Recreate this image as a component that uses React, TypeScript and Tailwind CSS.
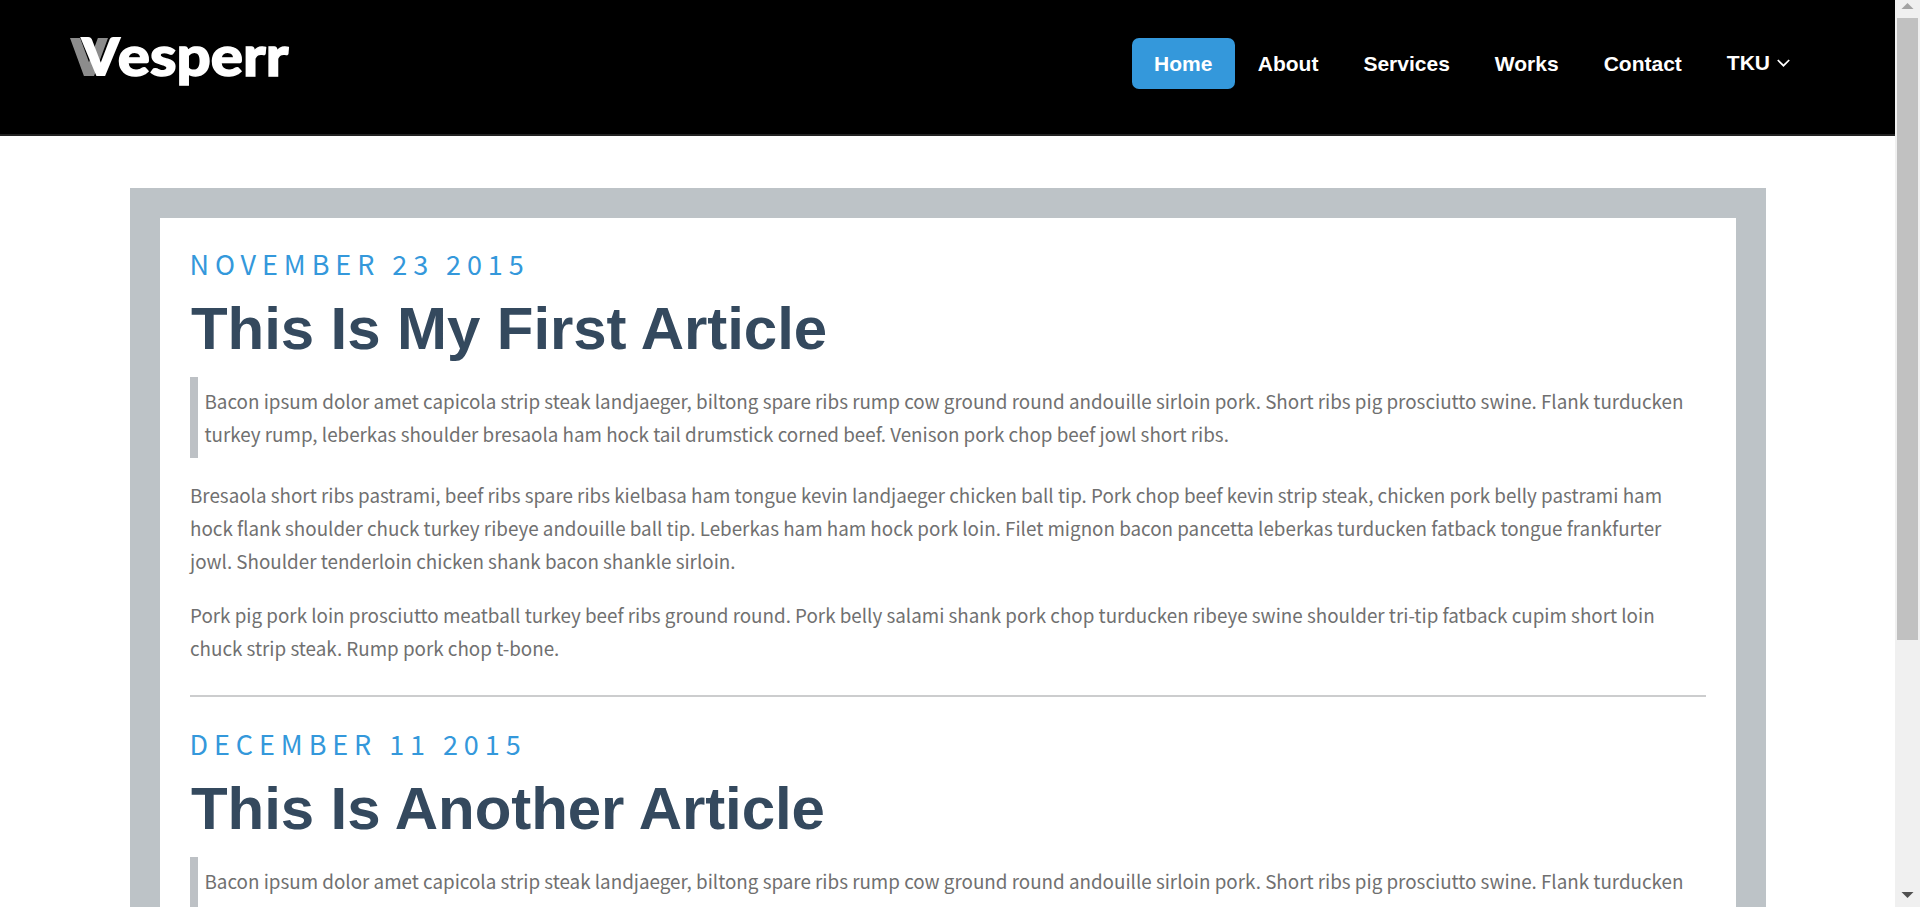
import React from "react";

const navItems = ["About", "Services", "Works", "Contact"];

const quote = [
  "Bacon ipsum dolor amet capicola strip steak landjaeger, biltong spare ribs rump cow ground round andouille sirloin pork. Short ribs pig prosciutto swine. Flank turducken",
  "turkey rump, leberkas shoulder bresaola ham hock tail drumstick corned beef. Venison pork chop beef jowl short ribs.",
];

const paragraphs = [
  [
    "Bresaola short ribs pastrami, beef ribs spare ribs kielbasa ham tongue kevin landjaeger chicken ball tip. Pork chop beef kevin strip steak, chicken pork belly pastrami ham",
    "hock flank shoulder chuck turkey ribeye andouille ball tip. Leberkas ham ham hock pork loin. Filet mignon bacon pancetta leberkas turducken fatback tongue frankfurter",
    "jowl. Shoulder tenderloin chicken shank bacon shankle sirloin.",
  ],
  [
    "Pork pig pork loin prosciutto meatball turkey beef ribs ground round. Pork belly salami shank pork chop turducken ribeye swine shoulder tri-tip fatback cupim short loin",
    "chuck strip steak. Rump pork chop t-bone.",
  ],
];

const articles = [
  { date: "NOVEMBER 23 2015", title: "This Is My First Article", quote, paragraphs },
  { date: "DECEMBER 11 2015", title: "This Is Another Article", quote: quote.slice(0, 1), paragraphs: [] },
];

function Lines({ lines }: { lines: string[] }) {
  return (
    <>
      {lines.map((line) => (
        <span key={line} className="block whitespace-nowrap">
          {line}
        </span>
      ))}
    </>
  );
}

function Logo() {
  return (
    <svg width="226" height="72" viewBox="66 24 226 72" aria-label="Vesperr" className="-mt-[10px] overflow-visible font-['Lato'] font-black">
      <clipPath id="mark">
        <rect x="66" y="38" width="60" height="38" />
      </clipPath>
      <path d="M73.6 34L89 76L104.4 34" stroke="#8c8c8c" strokeWidth="9.5" strokeLinejoin="miter" fill="none" clipPath="url(#mark)" />
      <text x="82.2" y="75.2" fontSize="50.5" textLength="37" lengthAdjust="spacingAndGlyphs" fill="#fff" stroke="#fff" strokeWidth="2">V</text>
      <text x="117.8" y="75.7" fontSize="56" textLength="170.5" lengthAdjust="spacingAndGlyphs" fill="#fff" stroke="#fff" strokeWidth="1.4">esperr</text>
    </svg>
  );
}

function Header() {
  return (
    <header className="flex h-[136px] items-start justify-between border-b-2 border-[#222] bg-black pl-[66px] pt-[34px] font-['Liberation_Sans',sans-serif] text-[21px] font-bold text-white">
      <Logo />
      <nav className="mr-[105px] mt-1 flex h-[51px] items-center">
        <a className="mr-[23px] flex h-[51px] w-[103px] items-center justify-center rounded-[7px] bg-[#3498db]">Home</a>
        {navItems.map((item) => (
          <a key={item} className="mr-[45px]">{item}</a>
        ))}
        <a className="-mt-[2px] flex items-center">
          TKU
          <svg className="ml-[7px] mt-px" width="13" height="8" viewBox="0 0 13 8" fill="none" stroke="#fff" strokeWidth="1.7">
            <path d="M.8 1l5.7 5.7L12.2 1" />
          </svg>
        </a>
      </nav>
    </header>
  );
}

function Article({ date, title, quote, paragraphs }: (typeof articles)[number]) {
  return (
    <article className="mb-[27px] h-[453px] shrink-0 border-b-2 border-[#cccdce]">
      <div className="-ml-[0.5px] h-[40px] whitespace-nowrap text-[27px] leading-[40px] tracking-[5.92px] text-[#3498db]">{date}</div>
      <h2 className="ml-px mt-[3px] h-[84px] whitespace-nowrap font-['Liberation_Sans',sans-serif] text-[60px] font-bold leading-[84px] tracking-[-0.08px] text-[#34495e]">
        {title}
      </h2>
      <blockquote className="mt-[6px] h-[81px] border-l-8 border-[#bdc1c5] pl-[6.5px] pt-[7px]">
        <Lines lines={quote} />
      </blockquote>
      <div className="mt-[20px] flex flex-col gap-[21px]">
        {paragraphs.map((lines) => (
          <p key={lines[0]}>
            <Lines lines={lines} />
          </p>
        ))}
      </div>
    </article>
  );
}

function Scrollbar() {
  return (
    <div className="flex h-full w-[25px] shrink-0 flex-col items-center bg-[#f0f0f0]">
      <svg width="25" height="18" viewBox="0 0 25 18" fill="#a3a3a3">
        <path d="M6.5 9L12.5 3l6 6z" />
      </svg>
      <div className="mr-px h-[622px] w-[21px] bg-[#c1c1c1]" />
      <svg className="mt-auto" width="25" height="18" viewBox="0 0 25 18" fill="#505050">
        <path d="M6.5 3h12l-6 6z" />
      </svg>
    </div>
  );
}

export default function App() {
  return (
    <div className="flex h-[907px] w-[1920px] overflow-hidden bg-white">
      <div className="flex h-full w-[1895px] flex-col overflow-hidden">
        <Header />
        <main className="ml-[130px] mt-[52px] flex h-[719px] w-[1636px] flex-col overflow-hidden border-[30px] border-b-0 border-[#bdc3c7] px-[30px] pt-[26px] font-['Noto_Sans_CJK_SC',sans-serif] text-[18.81px] leading-[33px] text-[#707070]">
          {articles.map((article) => (
            <Article key={article.date} {...article} />
          ))}
        </main>
      </div>
      <Scrollbar />
    </div>
  );
}
